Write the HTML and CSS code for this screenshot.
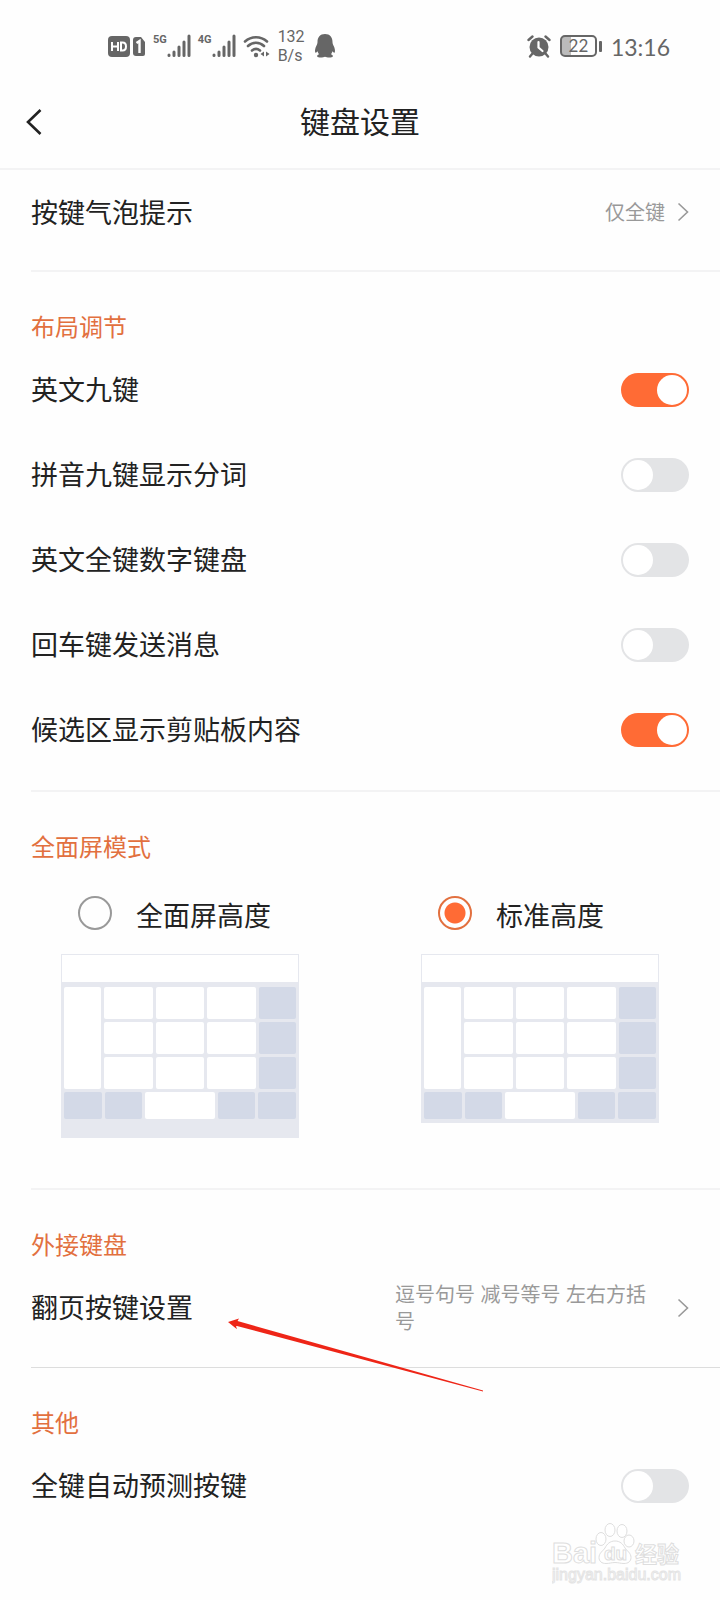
FILE: index.html
```html
<!DOCTYPE html>
<html lang="zh-CN">
<head>
<meta charset="utf-8">
<meta name="viewport" content="width=device-width, initial-scale=1">
<title>键盘设置</title>
<link rel="stylesheet" href="styles.css">
</head>
<body>
<div class="status">
  <div class="status-group">
    <svg class="icon" width="38" height="22" viewBox="0 0 38 22" aria-hidden="true">
      <rect width="22" height="21" y="1" rx="4" fill="#666"/>
      <path d="M4 7v9M10 7v9M4 11.500h6M13 7.500v8h1.500c2 0 3.500-1 3.500-4s-1.500-4-3.500-4z" fill="none" stroke="#fff" stroke-width="2"/>
      <path d="M28 2h5l4 5v12a2 2 0 0 1-2 2h-7a3 3 0 0 1-3-3V5a3 3 0 0 1 3-3z" fill="#666"/>
      <path d="M28.500 8l3-2v12" fill="none" stroke="#fff" stroke-width="2.400"/>
    </svg>
    <div class="signal">
      <span class="net">5G</span>
      <svg width="24" height="24" viewBox="0 0 24 24" aria-hidden="true"><path d="M2 21v.5M7 18v3.500M12 13v8.500M17 8v13.500M22 2v19.500" stroke="#666" stroke-width="3" stroke-linecap="round"/></svg>
    </div>
    <div class="signal">
      <span class="net">4G</span>
      <svg width="24" height="24" viewBox="0 0 24 24" aria-hidden="true"><path d="M2 21v.5M7 18v3.500M12 13v8.500M17 8v13.500M22 2v19.500" stroke="#666" stroke-width="3" stroke-linecap="round"/></svg>
    </div>
    <svg class="icon" width="27" height="24" viewBox="0 0 27 24" aria-hidden="true">
      <path d="M2 7.500a16.500 16.500 0 0 1 22 0M5 12a11.500 11.500 0 0 1 16 0M9 16.500a6.500 6.500 0 0 1 8 0" fill="none" stroke="#666" stroke-width="2.600" stroke-linecap="round"/>
      <circle cx="13" cy="21" r="2.200" fill="#666"/>
      <path d="M21 17.500v5l-3.500-2.500zM23 17.500v5l3.500-2.500z" fill="#666"/>
    </svg>
    <div class="speed"><span>132</span><span>B/s</span></div>
    <svg class="icon" width="22" height="24" viewBox="0 0 22 24" aria-hidden="true">
      <path d="M11 0c5 0 7.500 3.500 7.500 8 0 1.500.5 2.500 1.200 4 1.200 2.500 1.700 5 1 6.500-.6.700-1.500-.2-2.200-1.200-.3 1.200-.8 2-1.500 2.900 1.500.6 2 1.300 1.800 2.200-.5 1.300-5.800 1.300-7.800.300-2 1-7.300 1-7.800-.3-.2-.9.300-1.600 1.800-2.200-.7-.9-1.200-1.700-1.500-2.900-.7 1-1.600 1.900-2.200 1.200-.7-1.500-.2-4 1-6.500.7-1.500 1.200-2.500 1.200-4C3.500 3.500 6 0 11 0z" fill="#666"/>
    </svg>
  </div>
  <div class="status-group right">
    <svg class="icon" width="24" height="23" viewBox="0 0 24 23" aria-hidden="true">
      <circle cx="12" cy="12" r="9.500" fill="#666"/>
      <path d="M1.500 5l4-3.500M22.500 5l-4-3.500M5.500 18.500l-2.500 3M18.500 18.500l2.500 3" stroke="#666" stroke-width="2.400" stroke-linecap="round"/>
      <path d="M11.500 7v5.500l4 3.500" fill="none" stroke="#fff" stroke-width="2.200" stroke-linecap="round"/>
    </svg>
    <div class="battery"><span class="cell">22</span><span class="cap"></span></div>
    <span class="time">13:16</span>
  </div>
</div>

<header class="header">
  <button class="back" type="button" aria-label="返回">
    <svg width="18" height="28" viewBox="0 0 18 28" aria-hidden="true"><path d="M15.500 2L3 14l12.500 12" fill="none" stroke="#222" stroke-width="2.600"/></svg>
  </button>
  <h1 class="title">键盘设置</h1>
</header>

<main>
  <section class="section first">
    <button class="row" type="button">
      <span class="label">按键气泡提示</span>
      <span class="value">仅全键</span>
      <svg class="chevron" width="12" height="22" viewBox="0 0 12 22" aria-hidden="true"><path d="M1.500 2.500L10.500 11l-9 8.500" fill="none" stroke="#999" stroke-width="1.600"/></svg>
    </button>
  </section>

  <section class="section">
    <h2 class="heading">布局调节</h2>
    <label class="row"><span class="label">英文九键</span><input class="switch" type="checkbox" role="switch" checked></label>
    <label class="row"><span class="label">拼音九键显示分词</span><input class="switch" type="checkbox" role="switch"></label>
    <label class="row"><span class="label">英文全键数字键盘</span><input class="switch" type="checkbox" role="switch"></label>
    <label class="row"><span class="label">回车键发送消息</span><input class="switch" type="checkbox" role="switch"></label>
    <label class="row"><span class="label">候选区显示剪贴板内容</span><input class="switch" type="checkbox" role="switch" checked></label>
  </section>

  <section class="section modes-section">
    <h2 class="heading">全面屏模式</h2>
    <div class="modes">
      <label class="mode">
        <span class="choice"><input class="radio" type="radio" name="height"><span class="label">全面屏高度</span></span>
        <span class="keyboard tall">
          <span class="candidates"></span>
          <span class="keys">
            <i class="key side"></i><i class="key"></i><i class="key"></i><i class="key"></i><i class="key fn"></i>
            <i class="key"></i><i class="key"></i><i class="key"></i><i class="key fn"></i>
            <i class="key"></i><i class="key"></i><i class="key"></i><i class="key fn"></i>
          </span>
          <span class="bottom-keys"><i class="key fn"></i><i class="key fn"></i><i class="key"></i><i class="key fn"></i><i class="key fn"></i></span>
        </span>
      </label>
      <label class="mode">
        <span class="choice"><input class="radio" type="radio" name="height" checked><span class="label">标准高度</span></span>
        <span class="keyboard">
          <span class="candidates"></span>
          <span class="keys">
            <i class="key side"></i><i class="key"></i><i class="key"></i><i class="key"></i><i class="key fn"></i>
            <i class="key"></i><i class="key"></i><i class="key"></i><i class="key fn"></i>
            <i class="key"></i><i class="key"></i><i class="key"></i><i class="key fn"></i>
          </span>
          <span class="bottom-keys"><i class="key fn"></i><i class="key fn"></i><i class="key"></i><i class="key fn"></i><i class="key fn"></i></span>
        </span>
      </label>
    </div>
  </section>

  <section class="section external">
    <h2 class="heading">外接键盘</h2>
    <button class="row" type="button">
      <span class="label">翻页按键设置</span>
      <span class="value wide">逗号句号 减号等号 左右方括号</span>
      <svg class="chevron" width="12" height="22" viewBox="0 0 12 22" aria-hidden="true"><path d="M1.500 2.500L10.500 11l-9 8.500" fill="none" stroke="#999" stroke-width="1.600"/></svg>
    </button>
    <svg class="arrow" width="258" height="78" viewBox="0 0 258 78" aria-hidden="true"><path d="M2 6l11-3.500-1.500 2.500L257 74.500v1L11 10l-1 .2 1 3z" fill="#ee2517"/></svg>
  </section>

  <section class="section last">
    <h2 class="heading">其他</h2>
    <label class="row"><span class="label">全键自动预测按键</span><input class="switch" type="checkbox" role="switch"></label>
  </section>
</main>

<footer class="watermark">
  <svg width="132" height="66" viewBox="0 0 132 66" role="img" aria-label="Baidu经验">
    <g fill="#fff" stroke="#dedede" stroke-width="1">
      <text class="wm-latin" x="0" y="42" font-size="29">Bai</text>
      <path d="M63 20c5 0 8 3 10 7 2 3 6 5 6 9.500 0 4-3 6-7 6-3.500 0-5.500-1-9-1s-5.500 1-9 1c-4 0-7-2-7-6 0-4.500 4-6.500 6-9.500 2-4 5-7 10-7z"/>
      <ellipse cx="49" cy="18" rx="5" ry="6.500"/><ellipse cx="58" cy="9" rx="5" ry="6.500"/><ellipse cx="70" cy="10" rx="5" ry="6.500"/><ellipse cx="77" cy="20" rx="5" ry="6"/>
      <text class="wm-latin" x="52" y="39" font-size="19">du</text>
      <text class="wm-cjk" x="83" y="41" font-size="22">经验</text>
    </g>
    <text class="wm-url" x="0" y="59" font-size="16" fill="#fff" stroke="#e4e4e4" stroke-width="1">jingyan.baidu.com</text>
  </svg>
</footer>
</body>
</html>
```
FILE: styles.css
```css
* {
  box-sizing: border-box;
}

body {
  margin: 0;
  background: #fefefe;
  color: #222;
  font-family: "Liberation Sans", "Noto Sans CJK SC", sans-serif;
}

h1,
h2 {
  margin: 0;
  font-weight: 400;
}

button {
  border: 0;
  background: none;
  color: inherit;
  font-family: inherit;
  text-align: left;
}

.status {
  display: flex;
  align-items: center;
  justify-content: space-between;
  height: 84px;
  padding: 8px 50px 0 108px;
  color: #666;
}

.status-group {
  display: flex;
  align-items: center;
  gap: 7px;
}

.status-group.right {
  gap: 9px;
}

.icon {
  flex: none;
}

.signal {
  display: flex;
  align-items: flex-start;
}

.net {
  font: 700 11px/12px Roboto, sans-serif;
}

.speed {
  display: flex;
  flex-direction: column;
  margin: 0 2px 0 1px;
  font: 400 16px/19px Roboto, sans-serif;
}

.battery {
  display: flex;
  align-items: center;
  gap: 2px;
}

.cell {
  width: 37px;
  height: 22px;
  border: 2px solid #666;
  border-radius: 5px;
  background: linear-gradient(90deg, #bbb 9px, transparent 9px);
  font: 400 17px/18px Lato, sans-serif;
  text-align: center;
}

.cap {
  width: 3px;
  height: 11px;
  border-radius: 1px;
  background: #666;
}

.time {
  padding-top: 2px;
  font: 400 23px/28px Lato, sans-serif;
}

.header {
  display: grid;
  grid-template-columns: 48px 1fr 48px;
  align-items: center;
  height: 86px;
  padding-bottom: 8px;
  border-bottom: 2px solid #f3f3f4;
}

.back {
  display: flex;
  padding: 0 0 0 25px;
}

.title {
  padding-top: 2px;
  font-size: 30px;
  line-height: 40px;
  text-align: center;
}

.section {
  position: relative;
  padding-top: 40px;
  padding-bottom: 20px;
}

.section::after {
  content: "";
  position: absolute;
  right: 0;
  bottom: 0;
  left: 31px;
  height: 2px;
  background: #f3f3f4;
}

.section.first {
  padding-top: 0;
  padding-bottom: 18px;
}

.section.modes-section {
  padding-bottom: 52px;
}

.section.external {
  padding-bottom: 18px;
}

.section.external::after {
  height: 1px;
  background: #ddd;
}

.section.last {
  padding-bottom: 0;
}

.section.last::after {
  display: none;
}

.heading {
  margin-bottom: 3px;
  padding-left: 31px;
  color: #e2703f;
  font-size: 24px;
  line-height: 32px;
}

.row {
  display: flex;
  align-items: center;
  width: 100%;
  height: 85px;
  padding: 0 31px;
}

.first .row {
  height: 84px;
}

.label {
  flex: 1;
  padding-top: 3px;
  font-size: 27px;
  line-height: 36px;
}

.value {
  padding-top: 3px;
  color: #999;
  font-size: 20px;
  line-height: 27px;
}

.value.wide {
  width: 262px;
}

.chevron {
  flex: none;
  margin-left: 12px;
}

.value.wide + .chevron {
  margin-left: 20px;
}

.switch {
  flex: none;
  appearance: none;
  display: flex;
  width: 68px;
  height: 34px;
  margin: 0;
  padding: 2px;
  border-radius: 17px;
  background: #e3e4e6;
}

.switch::before {
  content: "";
  width: 30px;
  height: 30px;
  border-radius: 50%;
  background: #fff;
}

.switch:checked {
  justify-content: flex-end;
  background: #ff6b35;
}

.modes {
  display: grid;
  grid-template-columns: 1fr 1fr;
  align-items: start;
  margin-top: 32px;
}

.mode {
  display: flex;
  flex-direction: column;
  gap: 24px;
  padding-left: 61px;
}

.choice {
  display: flex;
  align-items: center;
  gap: 24px;
  height: 34px;
  padding-left: 17px;
}

.choice .label {
  padding-top: 7px;
}

.radio {
  appearance: none;
  width: 34px;
  height: 34px;
  margin: 0;
  border: 2px solid #999;
  border-radius: 50%;
}

.radio:checked {
  border-color: #e2703f;
  background: radial-gradient(circle, #ff6b35 10px, transparent 11px);
}

.keyboard {
  display: block;
  width: 238px;
  padding-bottom: 3px;
  border: 1px solid #e6e8ef;
  background: #e6e8ef;
}

.keyboard.tall {
  padding-bottom: 18px;
}

.candidates {
  display: block;
  height: 27px;
  background: #fff;
}

.keys,
.bottom-keys {
  display: grid;
  gap: 3px;
  padding: 5px 2px 0;
}

.keys {
  grid-template-columns: 37fr 48fr 48fr 48fr 37fr;
  grid-auto-rows: 32px;
}

.bottom-keys {
  grid-template-columns: 37fr 37fr 68fr 37fr 37fr;
  grid-auto-rows: 27px;
  padding-top: 3px;
}

.key {
  border-radius: 2px;
  background: #fff;
}

.key.side {
  grid-row: span 3;
}

.key.fn {
  background: #d3d9e7;
}

.arrow {
  position: absolute;
  top: 126px;
  left: 226px;
  z-index: 1;
}

.watermark {
  display: flex;
  justify-content: flex-end;
  margin-top: -7px;
  padding-right: 36px;
}

.wm-latin {
  font-family: "Liberation Sans", sans-serif;
  font-weight: 700;
}

.wm-cjk {
  font-family: "Noto Sans CJK SC", sans-serif;
  font-weight: 700;
}

.wm-url {
  font-family: "Liberation Sans", sans-serif;
}
```
